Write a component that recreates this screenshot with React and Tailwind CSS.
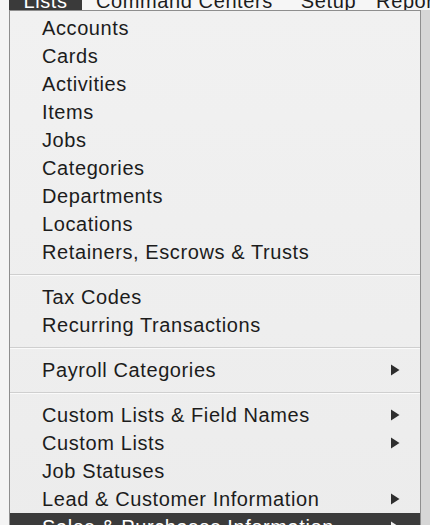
import React from 'react';

const groups = [
  [
    { label: 'Accounts' },
    { label: 'Cards' },
    { label: 'Activities' },
    { label: 'Items' },
    { label: 'Jobs' },
    { label: 'Categories' },
    { label: 'Departments' },
    { label: 'Locations' },
    { label: 'Retainers, Escrows & Trusts' },
  ],
  [{ label: 'Tax Codes' }, { label: 'Recurring Transactions' }],
  [{ label: 'Payroll Categories', sub: true }],
  [
    { label: 'Custom Lists & Field Names', sub: true },
    { label: 'Custom Lists', sub: true },
    { label: 'Job Statuses' },
    { label: 'Lead & Customer Information', sub: true },
    { label: 'Sales & Purchases Information', sub: true, active: true },
  ],
];

function Arrow({ light }) {
  return (
    <svg width="10" height="12" viewBox="0 0 10 12" className="shrink-0">
      <path d="M1 0.5 L9.5 6 L1 11.5 Z" fill={light ? '#f2f2f2' : '#2e2e2e'} />
    </svg>
  );
}

function MenuRow({ item }) {
  return (
    <div
      className={`flex h-[28px] items-center justify-between pl-[32px] pr-[20px] ${
        item.active ? 'bg-[#3b3b3b] text-white' : 'text-[#1c1c1c]'
      }`}
    >
      <span className="whitespace-nowrap">{item.label}</span>
      {item.sub && <Arrow light={item.active} />}
    </div>
  );
}

export default function App() {
  return (
    <div
      className="h-[525px] w-[430px] overflow-hidden bg-[#dcdcdc] text-[20px] leading-none tracking-[0.6px]"
      style={{ fontFamily: '"Liberation Sans", Arial, sans-serif' }}
    >
      {/* menu bar, only the lower edge of the titles is in view */}
      <div className="flex h-[10px] items-end overflow-hidden whitespace-nowrap bg-[#f6f6f6]">
        <div className="ml-[9px] flex h-[10px] w-[73px] shrink-0 items-end justify-center overflow-hidden bg-[#3a3a3a] text-white">
          <span className="-mb-[1px]">Lists</span>
        </div>
        <span className="-mb-[1px] ml-[14px] shrink-0 text-[#1c1c1c]">Command Centers</span>
        <span className="-mb-[1px] ml-[28px] shrink-0 text-[#1c1c1c]">Setup</span>
        <span className="-mb-[1px] ml-[20px] shrink-0 text-[#1c1c1c]">Reports</span>
      </div>

      <div className="flex">
        <div className="w-[9px] bg-[#f4f4f4]" />
        {/* dropdown panel */}
        <div className="w-[412px] border-x border-t border-[#8e8e8e] bg-gradient-to-b from-[#f1f1f1] to-[#ececec] pt-[3px]">
          {groups.map((group, gi) => (
            <div key={gi}>
              {gi > 0 && (
                <div className="flex h-[17px] flex-col justify-center">
                  <div className="h-px bg-[#cfcfcf]" />
                  <div className="h-px bg-[#fafafa]" />
                </div>
              )}
              {group.map((item) => (
                <MenuRow key={item.label} item={item} />
              ))}
            </div>
          ))}
        </div>
        <div className="w-[9px] bg-[#d6d6d6]" />
      </div>
    </div>
  );
}
